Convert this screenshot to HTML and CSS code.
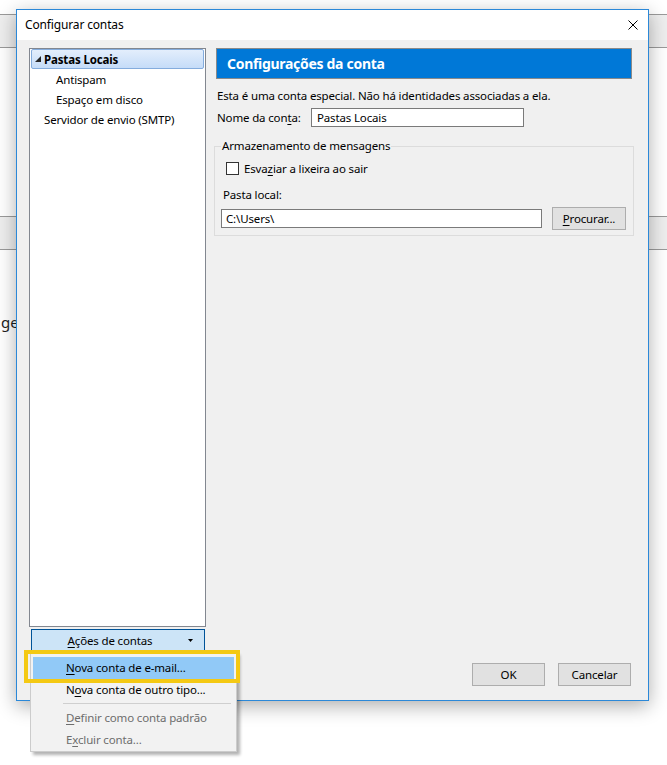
FILE: index.html
```html
<!DOCTYPE html>
<html lang="pt-BR">
<head>
<meta charset="utf-8">
<title>Configurar contas</title>
<link rel="stylesheet" href="styles.css">
</head>
<body>
<div class="app">
  <div class="band band-top"></div>
  <div class="band band-mid"></div>
  <div class="app-text">gem</div>
</div>

<div class="dialog">
  <div class="titlebar">
    <span class="title">Configurar contas</span>
    <svg class="close" width="10" height="10" viewBox="0 0 10 10"><path d="M0.5 0.5 L9.5 9.5 M9.5 0.5 L0.5 9.5" stroke="#000" stroke-width="1" fill="none"/></svg>
  </div>
  <div class="dbody">
    <div class="leftcol">
      <div class="tree">
        <div class="node sel"><svg class="tri" width="6" height="6" viewBox="0 0 6 6"><polygon points="6,0 6,6 0,6" fill="#262626"/></svg><b>Pastas Locais</b></div>
        <div class="node child">Antispam</div>
        <div class="node child">Espaço em disco</div>
        <div class="node">Servidor de envio (SMTP)</div>
      </div>
      <button class="actions"><span class="actions-label"><u>A</u>ções de contas</span><svg class="drop" width="5" height="3" viewBox="0 0 5 3"><polygon points="0,0 5,0 2.5,3" fill="#000"/></svg></button>
    </div>
    <div class="rightcol">
      <div class="header">Configurações da conta</div>
      <div class="note">Esta é uma conta especial. Não há identidades associadas a ela.</div>
      <div class="namerow">
        <span class="namelabel">Nome da con<u>t</u>a:</span>
        <div class="input name">Pastas Locais</div>
      </div>
      <fieldset class="storage">
        <legend>Armazenamento de mensagens</legend>
        <div class="checkrow"><span class="checkbox"></span><span>Esva<u>z</u>iar a lixeira ao sair</span></div>
        <div class="pl-label">Pasta local:</div>
        <div class="pathrow">
          <div class="input path">C:\Users\</div>
          <button class="btn browse"><u>P</u>rocurar...</button>
        </div>
      </fieldset>
      <div class="buttons">
        <button class="btn ok">OK</button>
        <button class="btn cancel">Cancelar</button>
      </div>
    </div>
  </div>
</div>

<div class="menu">
  <div class="mitem hot"><u>N</u>ova conta de e-mail...</div>
  <div class="mitem">N<u>o</u>va conta de outro tipo...</div>
  <div class="msep"></div>
  <div class="mitem dis"><u>D</u>efinir como conta padrão</div>
  <div class="mitem dis">E<u>x</u>cluir conta...</div>
</div>
<div class="ring"></div>
</body>
</html>
```

FILE: styles.css
```css
* { box-sizing: border-box; }
body {
  margin: 0;
  width: 667px;
  height: 765px;
  overflow: hidden;
  position: relative;
  background: #fff;
  font-family: "Noto Sans", "Open Sans", sans-serif;
  font-size: 11.5px;
  letter-spacing: -0.15px;
  color: #000;
}
u { text-decoration: underline; text-underline-offset: 2px; }

/* background window */
.band {
  height: 34px;
  border-top: 1px solid #9a9a9a;
  border-bottom: 1px solid #9a9a9a;
  background: #eeeeee;
}
.band-top { margin-top: 14px; }
.band-mid { margin-top: 168px; }
.app-text {
  margin-top: 62px;
  padding-left: 1px;
  font-size: 15px;
  line-height: 20px;
  letter-spacing: 0;
  color: #1e1e1e;
}

/* dialog */
.dialog {
  position: absolute;
  left: 16px;
  top: 9px;
  width: 633px;
  height: 692px;
  border: 1px solid #2b88d8;
  background: #f0f0f0;
  box-shadow: 0 5px 18px rgba(0,0,0,0.32);
  display: flex;
  flex-direction: column;
}
.titlebar {
  height: 30px;
  flex: none;
  background: #fff;
  display: flex;
  align-items: center;
  padding-left: 8px;
}
.title { line-height: 16px; font-size: 12px; }
.close { margin-left: auto; margin-right: 10px; }

.dbody {
  flex: 1;
  display: flex;
  gap: 8px;
  padding: 8px 0 14px 12px;
}
.leftcol {
  width: 177px;
  display: flex;
  flex-direction: column;
  align-self: flex-start;
}
.tree {
  height: 579px;
  border: 1px solid #828790;
  background: #fff;
  padding: 0 1px;
}
.node {
  height: 20px;
  display: flex;
  align-items: center;
  border: 1px solid transparent;
  padding-left: 12px;
  white-space: nowrap;
}
.node.sel {
  padding-left: 3px;
  border-color: #84acdd;
  border-radius: 2px;
  background: linear-gradient(#e3eefc, #c5dcf8);
}
.tri { margin-right: 3px; }
.node.child { padding-left: 24px; }

.actions {
  margin: 2px 0 0 2px;
  width: 174px;
  height: 22px;
  border: 1px solid #005499;
  background: #cce4f7;
  font: inherit;
  letter-spacing: inherit;
  color: #000;
  padding: 0;
  display: flex;
  align-items: center;
}
.actions-label { flex: 1; text-align: center; }
.drop { margin-right: 11px; }

.rightcol {
  width: 420px;
  display: flex;
  flex-direction: column;
}
.header {
  height: 31px;
  margin: 0 2px;
  border: 1px solid #8a8a8a;
  background: #0078d7;
  color: #fff;
  font-weight: bold;
  font-size: 14px;
  letter-spacing: -0.3px;
  padding-left: 10px;
  display: flex;
  align-items: center;
}
.note {
  margin-top: 9px;
  padding-left: 3px;
  line-height: 16px;
}
.namerow {
  margin-top: 4px;
  display: flex;
  align-items: center;
  padding-left: 3px;
}
.namelabel { width: 94px; }
.input {
  height: 19px;
  border: 1px solid #7a7a7a;
  background: #fff;
  display: flex;
  align-items: center;
  padding-left: 5px;
  white-space: nowrap;
}
.input.name { width: 213px; }

.storage {
  margin: 11px 0 0 0;
  border: 1px solid #dcdcdc;
  padding: 0 6px 5px 6px;
  min-width: 0;
}
.storage legend {
  padding: 0 1px;
  line-height: 16px;
}
.checkrow {
  margin-top: 6px;
  height: 16px;
  display: flex;
  align-items: center;
  padding-left: 5px;
}
.checkbox {
  width: 13px;
  height: 13px;
  border: 1px solid #333;
  background: #fff;
  margin-right: 5px;
}
.pl-label {
  margin-top: 11px;
  padding-left: 2px;
  line-height: 16px;
}
.pathrow {
  margin-top: 4px;
  display: flex;
  align-items: center;
}
.input.path { width: 321px; padding-left: 4px; }
.btn {
  height: 23px;
  border: 1px solid #adadad;
  background: #e1e1e1;
  font: inherit;
  letter-spacing: inherit;
  color: #000;
  padding: 0;
}
.browse { width: 74px; margin-left: 10px; }

.buttons {
  margin-top: auto;
  display: flex;
  justify-content: flex-end;
  gap: 13px;
  padding-right: 3px;
}
.ok, .cancel { width: 73px; }

/* popup menu */
.menu {
  position: absolute;
  left: 30px;
  top: 652px;
  width: 207px;
  height: 100px;
  border: 1px solid #cccccc;
  background: #f2f2f2;
  padding: 4px 2px 0 2px;
  box-shadow: 3px 3px 3px rgba(0,0,0,0.3);
}
.mitem {
  height: 22px;
  line-height: 22px;
  padding-left: 33px;
  white-space: nowrap;
}
.mitem.hot { background: #91c9f7; }
.mitem.dis { color: #6d6d6d; }
.msep {
  height: 6px;
  margin: 0 3px 0 30px;
  border-top: 2px solid transparent;
  border-bottom: 3px solid transparent;
  background: #cfcfcf;
  background-clip: content-box;
}
.ring {
  position: absolute;
  left: 24px;
  top: 650px;
  width: 216px;
  height: 33px;
  border: 4px solid #f4c914;
}
```
